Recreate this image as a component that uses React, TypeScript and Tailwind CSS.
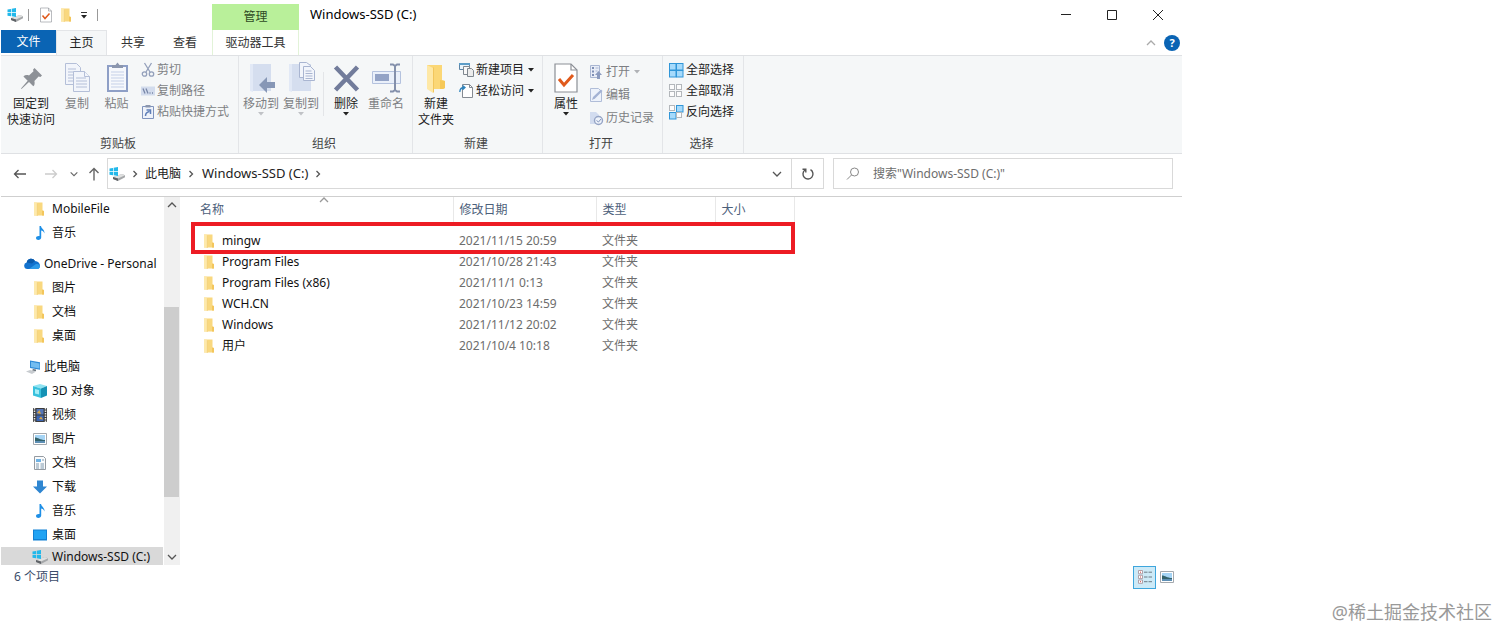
import React, { useState } from 'react';

type IconProps = { className?: string };

const DriveIcon: React.FC<IconProps> = ({ className = 'w-4 h-4 shrink-0' }) => (
  <svg className={className} viewBox="0 0 16 16">
    <path d="M4 11l9-3 3 1.300v2L9 15l-5-2z" fill="#a5a7a9" />
    <path d="M4 11l9-3 3 1.300L9 12.600z" fill="#dfe0e0" />
    <path d="M4 13l5 2v-2.400L4 11z" fill="#5f6368" />
    <path d="M.5 2.500l3.500-.6v3.300H.5zM4.700 1.800l4.300-.7v4.100H4.700zM.5 5.900H4v3.300L.5 8.700zM4.700 5.900H9v4l-4.300-.6z" fill="#22b8ea" />
  </svg>
);

const FolderIcon: React.FC<IconProps> = ({ className = 'w-4 h-4 shrink-0' }) => (
  <svg className={className} viewBox="0 0 16 16">
    <path d="M2 1.500h8.500v8l1.500.5v4.500H2z" fill="#f9d87f" />
    <path d="M2 1.500h2.500l1 1.500v12L2 14z" fill="#fde9ac" />
    <path d="M5.500 3v12l-.6-.2V2.200z" fill="#efc768" />
    <path d="M10 9.500l2 .5v4.500h-2z" fill="#f3c65c" />
  </svg>
);

const BigFolderIcon: React.FC = () => (
  <svg className="w-8 h-8" viewBox="0 0 32 32">
    <path d="M7 3h15v15l3 1v7l-2 1H7z" fill="#fbd776" />
    <path d="M7 3l6 3v25l-6-4z" fill="#fee8a6" />
    <path d="M13 6l1-1v25l-1 1z" fill="#f2c65c" />
    <path d="M20 18l5 1v7l-2 1h-3z" fill="#f6c857" />
  </svg>
);

const CheckDocIcon: React.FC<IconProps> = ({ className = 'w-8 h-8' }) => (
  <svg className={className} viewBox="0 0 32 32" fill="none">
    <path d="M5 2h16l6 6v22H5z" fill="#fff" stroke="#8b8f96" strokeWidth="1.200" />
    <path d="M21 2v6h6" stroke="#8b8f96" strokeWidth="1.200" />
    <path d="M9 17l5 6 9-10" stroke="#e05a1c" strokeWidth="3" />
  </svg>
);

const PinIcon: React.FC = () => (
  <svg className="w-8 h-8" viewBox="0 0 32 32">
    <path d="M19.500 6l7.500 7.500-1.600 1.500-1.800-.5-4.200 4.400c.6 2.400.2 4.200-1.100 5.400l-4.300-4.300L6.500 27 6 26.500l6.700-7.800-4.300-4.300c1.400-1.300 3.300-1.600 5.600-1l4.500-4.200-.5-1.500z" fill="#8d9197" />
  </svg>
);

const CopyIcon: React.FC = () => (
  <svg className="w-8 h-8" viewBox="0 0 32 32" stroke="#b4bfd8" fill="#f2f5fb">
    <path d="M4.500 1.500h11l4 4v17h-15z" />
    <path d="M7 7h8M7 10h9M7 13h9M7 16h9M7 19h9" />
    <path d="M12.500 9.500h11l5 5v15h-16z" />
    <path d="M23.500 9.500v5h5M15 16h10M15 19h11M15 22h11M15 25h11" />
  </svg>
);

const PasteIcon: React.FC = () => (
  <svg className="w-8 h-8" viewBox="0 0 32 32">
    <path d="M7 4h19v25H7z" fill="#f6f8fc" stroke="#8e9fc6" strokeWidth="2" />
    <path d="M11 6V3h3.500l2-2.500 2 2.500H22v3z" fill="#8b96ae" />
    <path d="M10 10h13M10 13h13M10 16h13M10 19h13M10 22h13M10 25h13" stroke="#c5d0e8" />
  </svg>
);

const MoveToIcon: React.FC = () => (
  <svg className="w-8 h-8" viewBox="0 0 32 32">
    <path d="M5 2h21v27H5z" fill="#d5deef" />
    <path d="M5 2h3v28l-3-1z" fill="#e2e9f6" />
    <path d="M14 23l8-8v5h8v6h-8v5z" fill="#8797b6" />
  </svg>
);

const CopyToIcon: React.FC = () => (
  <svg className="w-8 h-8" viewBox="0 0 32 32">
    <path d="M4 2h22v27H4z" fill="#d5deef" />
    <path d="M4 2h3v28l-3-1z" fill="#e2e9f6" />
    <g fill="#f2f5fb" stroke="#a9b5d1">
      <path d="M14.500.5h7l4 3v12h-11z" />
      <path d="M18.500 4.500h7l4 4v10h-11z" />
      <path d="M20.500 9h6M20.500 11.500h7M20.500 14h7M20.500 16.500h7" />
    </g>
  </svg>
);

const DeleteIcon: React.FC = () => (
  <svg className="w-8 h-8" viewBox="0 0 32 32">
    <path d="M5.500 5l22 23M27.500 5l-22 23" stroke="#727c9b" strokeWidth="4.500" />
  </svg>
);

const RenameIcon: React.FC = () => (
  <svg className="w-8 h-8" viewBox="0 0 32 32" fill="none">
    <path d="M2.500 9.500h28v12h-28z" fill="#eaf0fa" stroke="#b4c2de" />
    <path d="M5 12h14v7H5z" fill="#93a3c6" />
    <path d="M20 2.500h3l2 1.500 2-1.500h3M25 4v24M20 29.500h3l2-1.500 2 1.500h3" stroke="#8490ab" strokeWidth="2" />
  </svg>
);

const CutIcon: React.FC = () => (
  <svg className="w-4 h-4" viewBox="0 0 16 16" fill="none" stroke="#94a0bb" strokeWidth="1.300">
    <path d="M4.500 1l5.500 9M11.500 1L6 10" />
    <circle cx="4.500" cy="12" r="2.200" />
    <circle cx="11.500" cy="12" r="2.200" />
  </svg>
);

const PathIcon: React.FC = () => (
  <svg className="w-4 h-4" viewBox="0 0 16 16" fill="none">
    <path d="M1 3.500h14v9H1z" fill="#d3dced" />
    <path d="M3 5.500l2 5M6 5.500l2 5M9.500 10h1M12 10h1" stroke="#7887a8" strokeWidth="1.300" />
  </svg>
);

const ShortcutIcon: React.FC = () => (
  <svg className="w-4 h-4" viewBox="0 0 16 16" fill="none">
    <path d="M2.500 2.500h11v12h-11z" fill="#eef2fa" stroke="#7f93bd" />
    <path d="M5.500 1h5v2.500h-5z" fill="#8b96ae" />
    <path d="M5.500 12c0-3 1.500-4 4-4.500M6.500 6H10.500v4" stroke="#5f7fb8" strokeWidth="1.500" />
  </svg>
);

const NewItemIcon: React.FC = () => (
  <svg className="w-4 h-4" viewBox="0 0 16 16" strokeWidth="1">
    <path d="M.5 1.500h10v6H.5z" fill="#e8f3fb" stroke="#5b84a6" />
    <path d="M0 1h11v2H0z" fill="#5b9cc7" />
    <path d="M4.500 4.500h6v8h-6z" fill="#f8f8f8" stroke="#7f878f" />
    <path d="M8.500 6.500h4l2 2v6h-6z" fill="#ececec" stroke="#7f878f" />
  </svg>
);

const EasyAccessIcon: React.FC = () => (
  <svg className="w-4 h-4" viewBox="0 0 16 16" fill="none">
    <path d="M3.500 1.500h7l3 3v10h-10z" fill="#fff" stroke="#858b92" />
    <path d="M10.500 1.500v3h3" stroke="#858b92" />
    <path d="M.8 9c0-3 1.500-4.500 4.500-4.500M3.500 2.500l2.500 2-2.500 2.300" stroke="#2f84bd" strokeWidth="1.300" />
  </svg>
);

const OpenIcon: React.FC = () => (
  <svg className="w-4 h-4" viewBox="0 0 16 16">
    <path d="M1.500 1.500h9v12h-9z" fill="#e8edf7" stroke="#a9b6d2" />
    <path d="M3 3h2v2H3zM3 6.500h2v2H3zM3 10h2v2H3z" fill="#7e8fb5" />
    <path d="M6.500 4h3M6.500 7h2" stroke="#aab6d2" />
    <path d="M9.500 7l3.500 4h-2v4H8v-4H6z" fill="#8b9bbf" />
  </svg>
);

const EditIcon: React.FC = () => (
  <svg className="w-4 h-4" viewBox="0 0 16 16">
    <path d="M1.500 1.500h8l3 3v10h-11z" fill="#edf2fb" stroke="#b0bdd8" />
    <path d="M3 13l1-3 8-7.500 1.500 1.500L6 11.500z" fill="#a3b2d4" />
  </svg>
);

const HistoryIcon: React.FC = () => (
  <svg className="w-4 h-4" viewBox="0 0 16 16">
    <path d="M1 2h6l3 3v9H1z" fill="#d2dcef" />
    <circle cx="9.500" cy="10.500" r="4" fill="#edf2fa" stroke="#95a4c5" strokeWidth="1.400" />
    <path d="M7.500 10.500l2 1.500 2.500-3" stroke="#8395bd" fill="none" />
  </svg>
);

// 2x2 glyph of the select buttons, a selected cell is larger and blue
const SelectGrid: React.FC<{ on: boolean[] }> = ({ on }) => (
  <svg className="w-4 h-4" viewBox="0 0 16 16">
    {on.map((selected, i) => (
      <rect
        key={i}
        x={i % 2 ? 7.5 : 0.5}
        y={i > 1 ? 8.5 : 1.5}
        width={selected ? 6.5 : 5}
        height={selected ? 6.5 : 5}
        fill={selected ? '#a6dafb' : '#fcfcfc'}
        stroke={selected ? '#3096d8' : '#b3b7bb'}
      />
    ))}
  </svg>
);

const MusicIcon: React.FC = () => (
  <svg className="w-4 h-4 shrink-0" viewBox="0 0 16 16">
    <path d="M7.500 1H9c.3 2.500 3.800 3.500 3.500 7.500-.7-2-2-2.800-3.300-3v7c0 1.500-1.300 2.500-2.800 2.500-1.400 0-2.400-.8-2.400-2 0-1.300 1.300-2.300 3.500-2z" fill="#1e8fe6" />
  </svg>
);

const CloudIcon: React.FC = () => (
  <svg className="w-4 h-4 shrink-0" viewBox="0 0 16 16">
    <path d="M3.300 13a3.300 3.300 0 01-.6-6.500A4.500 4.500 0 0111 5c3 .2 5 2 5 4.800 0 1.900-1.300 3.200-3 3.200z" fill="#1272ce" />
    <path d="M5 13l7-5c2.500-.3 4 .8 4 2.400 0 1.500-1.300 2.600-3 2.600z" fill="#2d9ae8" />
    <path d="M2.700 6.500A4.500 4.500 0 0111 5L8 7.500z" fill="#0b5cad" />
  </svg>
);

const PcIcon: React.FC = () => (
  <svg className="w-4 h-4 shrink-0" viewBox="0 0 16 16">
    <path d="M6 1.500l11 2v7.500L6 9z" fill="#2f8ad6" />
    <path d="M7 2.800l8.500 1.700v5L7 8z" fill="#74bdf0" />
    <path d="M9 10l3 .5v1.700l-4-.7z" fill="#6c757d" />
    <path d="M2 12.500L6 11l6 1.500L8 15z" fill="#c8ccd0" />
  </svg>
);

const CubeIcon: React.FC = () => (
  <svg className="w-4 h-4 shrink-0" viewBox="0 0 16 16">
    <path d="M1 3l7-2 7 2-6 2.500z" fill="#8fe3f2" />
    <path d="M1 3l8 2.500V15L1 12.500z" fill="#38c1dd" />
    <path d="M9 5.500L15 3v9.500L9 15z" fill="#1592b5" />
    <path d="M3 6l4 1v4.500L3 10.500z" fill="#a6edf7" />
  </svg>
);

const VideoIcon: React.FC = () => (
  <svg className="w-4 h-4 shrink-0" viewBox="0 0 16 16">
    <path d="M1 1h14v14H1z" fill="#3d3d3d" />
    <path d="M2.500 1v14M13.500 1v14" stroke="#e6e6e6" strokeWidth="1.500" strokeDasharray="1.500 1" />
    <path d="M4.500 2h7v5.500h-7z" fill="#5576b8" />
    <path d="M4.500 8.500h7V14h-7z" fill="#3c66b4" />
    <path d="M5 6l2.500-3L9 7zM7 12l2-2.500 2 3z" fill="#d9a441" />
  </svg>
);

const PictureIcon: React.FC = () => (
  <svg className="w-4 h-4 shrink-0" viewBox="0 0 16 16">
    <path d="M1.500 2.500h13v11h-13z" fill="#fff" stroke="#a4a9ae" />
    <path d="M3 4h10v8H3z" fill="#a5d4f5" />
    <path d="M3 6.500c3 0 5 2.500 10 2.500v1.500H3z" fill="#33626a" />
    <path d="M3 10h10v2H3z" fill="#5d8fb5" />
  </svg>
);

const DocumentIcon: React.FC = () => (
  <svg className="w-4 h-4 shrink-0" viewBox="0 0 16 16">
    <path d="M2.500 1.500h9l2 2v11h-11z" fill="#fafbfc" stroke="#949ba2" />
    <path d="M4 4h5v3H4z" fill="#6fb2e4" />
    <path d="M10 5h2M4 9h3M4 11h3M4 13h3M8.500 9H12M8.500 11H12M8.500 13H12" stroke="#7e99ae" />
  </svg>
);

const DownloadIcon: React.FC = () => (
  <svg className="w-4 h-4 shrink-0" viewBox="0 0 16 16">
    <path d="M5 1.500h6v6h4L8 14.500l-7-7h4z" fill="#2f86d1" />
  </svg>
);

const DesktopIcon: React.FC = () => (
  <svg className="w-4 h-4 shrink-0" viewBox="0 0 16 16">
    <path d="M1 2.500h14v11H1z" fill="#1180d4" />
    <path d="M2 3.500h12V12H2z" fill="#21a3f3" />
  </svg>
);

const DetailsIcon: React.FC = () => (
  <svg className="w-4 h-4" viewBox="0 0 16 16" fill="none">
    <path d="M1.500 1.500h4v3.300h-4zM1.500 6.300h4v3.300h-4zM1.500 11h4v3.300h-4z" fill="#fff" stroke="#b0a0a8" />
    <path d="M3 3.200h1M3 8h1M3 12.700h1" stroke="#d04545" />
    <path d="M7 3.200h3.500M11.500 3.200H15M7 8h3.500M11.500 8H15M7 12.700h3.500M11.500 12.700H15" stroke="#6d7c86" />
  </svg>
);

const Chevron: React.FC<{ dir: 'up' | 'down' | 'right'; className?: string }> = ({ dir, className = 'w-3 h-3 text-[#555]' }) => {
  const d = { up: 'M2 8l4-4 4 4', down: 'M2 4l4 4 4-4', right: 'M4.500 3l3 3-3 3' }[dir];
  return (
    <svg className={className} viewBox="0 0 12 12" fill="none" stroke="currentColor" strokeWidth="1.300">
      <path d={d} />
    </svg>
  );
};

const Caret: React.FC<IconProps> = ({ className = 'text-[#222]' }) => (
  <svg className={`w-[6px] h-[4px] ${className}`} viewBox="0 0 6 4" fill="currentColor">
    <path d="M0 0h6L3 3.500z" />
  </svg>
);

type BigButtonProps = {
  icon: React.ReactNode;
  lines: string[];
  width?: string;
  disabled?: boolean;
  caret?: boolean;
};

const BigButton: React.FC<BigButtonProps> = ({ icon, lines, width = 'w-10', disabled, caret }) => (
  <button
    type="button"
    disabled={disabled}
    className={`${width} shrink-0 flex flex-col items-center pt-[6px] whitespace-nowrap ${disabled ? 'text-[#7d7f83]' : 'text-[#222]'}`}
  >
    {icon}
    <span className="mt-[2px] leading-4">
      {lines.map(line => <span key={line} className="block">{line}</span>)}
    </span>
    {caret && <Caret className={disabled ? 'text-[#c0c2c6]' : 'text-[#222]'} />}
  </button>
);

type SmallButtonProps = {
  icon: React.ReactNode;
  label: string;
  height?: string;
  disabled?: boolean;
  caret?: boolean;
};

const SmallButton: React.FC<SmallButtonProps> = ({ icon, label, height = 'h-[21px]', disabled, caret }) => (
  <button
    type="button"
    disabled={disabled}
    className={`${height} flex items-center whitespace-nowrap ${disabled ? 'text-[#7d7f83]' : 'text-[#222]'}`}
  >
    {icon}
    <span className="ml-px mr-1">{label}</span>
    {caret && <Caret className={disabled ? 'text-[#b0b2b6]' : 'text-[#222]'} />}
  </button>
);

const RibbonGroup: React.FC<{ title: string; width: string; children: React.ReactNode }> = ({ title, width, children }) => (
  <section className={`${width} shrink-0 flex flex-col border-r border-[#e3e5e8]`}>
    <div className="flex h-20">{children}</div>
    <h2 className="pr-[3px] text-center leading-4 text-[#444]">{title}</h2>
  </section>
);

type NavItem = { label: string; icon: React.ReactNode; root?: boolean; selected?: boolean };

const NAV_ITEMS: NavItem[] = [
  { label: 'MobileFile', icon: <FolderIcon /> },
  { label: '音乐', icon: <MusicIcon /> },
  { label: 'OneDrive - Personal', icon: <CloudIcon />, root: true },
  { label: '图片', icon: <FolderIcon /> },
  { label: '文档', icon: <FolderIcon /> },
  { label: '桌面', icon: <FolderIcon /> },
  { label: '此电脑', icon: <PcIcon />, root: true },
  { label: '3D 对象', icon: <CubeIcon /> },
  { label: '视频', icon: <VideoIcon /> },
  { label: '图片', icon: <PictureIcon /> },
  { label: '文档', icon: <DocumentIcon /> },
  { label: '下载', icon: <DownloadIcon /> },
  { label: '音乐', icon: <MusicIcon /> },
  { label: '桌面', icon: <DesktopIcon /> },
  { label: 'Windows-SSD (C:)', icon: <DriveIcon />, selected: true },
];

const FILES = [
  { name: 'mingw', date: '2021/11/15 20:59' },
  { name: 'Program Files', date: '2021/10/28 21:43' },
  { name: 'Program Files (x86)', date: '2021/11/1 0:13' },
  { name: 'WCH.CN', date: '2021/10/23 14:59' },
  { name: 'Windows', date: '2021/11/12 20:02' },
  { name: '用户', date: '2021/10/4 10:18' },
];

const TitleBar: React.FC = () => (
  <div className="flex h-[30px]">
    <div className="w-[211px] shrink-0 flex items-center pl-[6px]">
      <DriveIcon />
      <div className="w-px h-3 ml-[5px] bg-[#999]"></div>
      <button type="button" aria-label="属性" className="ml-[9px]"><CheckDocIcon className="w-4 h-4" /></button>
      <button type="button" aria-label="新建文件夹" className="ml-[5px]"><FolderIcon /></button>
      <button type="button" aria-label="自定义快速访问工具栏" className="ml-[6px] flex flex-col items-center gap-[2px]">
        <span className="w-[6px] h-px bg-[#333]"></span>
        <Caret />
      </button>
      <div className="w-px h-3 ml-[10px] bg-[#999]"></div>
    </div>
    <div className="w-[87px] shrink-0 mt-1 flex items-center justify-center bg-[#b9f09a] text-[#2f4a25]">管理</div>
    <h1 className="ml-[11px] flex-1 self-center text-[13px] text-black">Windows-SSD (C:)</h1>
    <div className="flex mr-px">
      <button type="button" aria-label="最小化" className="w-[46px] flex items-center justify-center">
        <svg className="w-[10px] h-[10px]" viewBox="0 0 10 10"><path d="M0 4.500h10" stroke="#222" /></svg>
      </button>
      <button type="button" aria-label="最大化" className="w-[46px] flex items-center justify-center">
        <svg className="w-[10px] h-[10px]" viewBox="0 0 10 10"><path d="M.5.5h9v9h-9z" fill="none" stroke="#222" /></svg>
      </button>
      <button type="button" aria-label="关闭" className="w-[46px] flex items-center justify-center">
        <svg className="w-[10px] h-[10px]" viewBox="0 0 10 10"><path d="M0 0l10 10M10 0L0 10" stroke="#222" /></svg>
      </button>
    </div>
  </div>
);

const TabBar: React.FC = () => (
  <nav className="flex h-[25px] text-[#333]">
    <button type="button" className="w-[55px] h-[23px] bg-[#0a64b4] text-white">文件</button>
    <button type="button" className="w-[51px] border-x border-t border-[#e3e5e8] bg-[#f5f7f8] text-[#222]">主页</button>
    <button type="button" className="w-[52px]">共享</button>
    <button type="button" className="w-[52px]">查看</button>
    <button type="button" className="w-[87px] ml-px border-x border-[#e2f3d8]">驱动器工具</button>
    <div className="flex-1"></div>
    <button type="button" aria-label="折叠功能区" className="mr-[7px]"><Chevron dir="up" className="w-3 h-3 text-[#aaa]" /></button>
    <button type="button" aria-label="帮助" className="self-center mr-[2px] w-4 h-4 rounded-full bg-[#0a64b4] text-white text-[11px] leading-4 font-bold">?</button>
  </nav>
);

const Ribbon: React.FC = () => (
  <div className="flex h-[99px] border-y border-[#dfe1e4] bg-[#f5f7f8]">
    <RibbonGroup title="剪贴板" width="w-[238px]">
      <BigButton icon={<PinIcon />} lines={['固定到', '快速访问']} width="w-[60px]" />
      <BigButton icon={<CopyIcon />} lines={['复制']} width="w-[32px]" disabled />
      <BigButton icon={<PasteIcon />} lines={['粘贴']} width="w-[47px]" disabled />
      <div className="pt-[3px] flex flex-col">
        <SmallButton icon={<CutIcon />} label="剪切" disabled />
        <SmallButton icon={<PathIcon />} label="复制路径" disabled />
        <SmallButton icon={<ShortcutIcon />} label="粘贴快捷方式" disabled />
      </div>
    </RibbonGroup>
    <RibbonGroup title="组织" width="w-[174px]">
      <div className="w-[2px]"></div>
      <BigButton icon={<MoveToIcon />} lines={['移动到']} disabled caret />
      <BigButton icon={<CopyToIcon />} lines={['复制到']} disabled caret />
      <div className="w-px mx-[2px] mt-4 h-11 bg-[#e3e5e8]"></div>
      <BigButton icon={<DeleteIcon />} lines={['删除']} caret />
      <BigButton icon={<RenameIcon />} lines={['重命名']} disabled />
    </RibbonGroup>
    <RibbonGroup title="新建" width="w-[130px]">
      <BigButton icon={<BigFolderIcon />} lines={['新建', '文件夹']} width="w-[46px]" />
      <div className="pt-[3px] flex flex-col">
        <SmallButton icon={<NewItemIcon />} label="新建项目" caret />
        <SmallButton icon={<EasyAccessIcon />} label="轻松访问" caret />
      </div>
    </RibbonGroup>
    <RibbonGroup title="打开" width="w-[120px]">
      <BigButton icon={<CheckDocIcon />} lines={['属性']} width="w-[46px]" caret />
      <div className="pt-[4px] flex flex-col">
        <SmallButton icon={<OpenIcon />} label="打开" height="h-[23px]" disabled caret />
        <SmallButton icon={<EditIcon />} label="编辑" height="h-[23px]" disabled />
        <SmallButton icon={<HistoryIcon />} label="历史记录" height="h-[23px]" disabled />
      </div>
    </RibbonGroup>
    <RibbonGroup title="选择" width="w-[81px]">
      <div className="pt-[3px] pl-[6px] flex flex-col">
        <SmallButton icon={<SelectGrid on={[true, true, true, true]} />} label="全部选择" />
        <SmallButton icon={<SelectGrid on={[false, false, false, false]} />} label="全部取消" />
        <SmallButton icon={<SelectGrid on={[false, true, true, false]} />} label="反向选择" />
      </div>
    </RibbonGroup>
  </div>
);

const AddressBar: React.FC = () => {
  const [query, setQuery] = useState('');

  return (
    <div className="flex h-[43px] pt-1 pb-[7px] pr-[9px] border-b border-[#cfcfcf]">
      <div className="w-[106px] shrink-0 flex items-center pl-3">
        <button type="button" aria-label="返回">
          <svg className="w-[14px] h-[14px]" viewBox="0 0 14 14" fill="none" stroke="#555" strokeWidth="1.300"><path d="M13 7H1.500M5.500 3L1.500 7l4 4" /></svg>
        </button>
        <button type="button" aria-label="前进" disabled className="ml-[17px]">
          <svg className="w-[14px] h-[14px]" viewBox="0 0 14 14" fill="none" stroke="#ccc" strokeWidth="1.300"><path d="M1 7h11.500M8.500 3l4 4-4 4" /></svg>
        </button>
        <button type="button" aria-label="最近浏览的位置" className="ml-[11px]"><Chevron dir="down" className="w-[10px] h-[10px] text-[#666]" /></button>
        <button type="button" aria-label="上移" className="ml-2">
          <svg className="w-[14px] h-[14px]" viewBox="0 0 14 14" fill="none" stroke="#666" strokeWidth="1.400"><path d="M7 13.500V1.500M2.500 6L7 1.500 11.500 6" /></svg>
        </button>
      </div>
      <div className="flex-1 flex items-center border border-[#d9d9d9] text-[#222]">
        <span className="ml-px"><DriveIcon /></span>
        <span className="ml-1"><Chevron dir="right" /></span>
        <a href="#pc" className="ml-1">此电脑</a>
        <span className="ml-1"><Chevron dir="right" /></span>
        <a href="#c" className="ml-[5px] text-[13px]">Windows-SSD (C:)</a>
        <span className="ml-1"><Chevron dir="right" /></span>
        <button type="button" aria-label="以前的位置" className="ml-auto mr-2"><Chevron dir="down" /></button>
      </div>
      <button type="button" aria-label="刷新" className="w-8 flex items-center justify-center border-y border-r border-[#d9d9d9]">
        <svg className="w-[14px] h-[14px]" viewBox="0 0 14 14" fill="none" stroke="#555" strokeWidth="1.400"><path d="M9.500 2.700a5 5 0 11-5.500.3M1.500 2.200h3.300v3.300" /></svg>
      </button>
      <label className="w-[340px] ml-[9px] flex items-center border border-[#d9d9d9]">
        <svg className="w-[14px] h-[14px] ml-3 shrink-0" viewBox="0 0 14 14" fill="none" stroke="#888"><circle cx="8.500" cy="5" r="4" /><path d="M5.500 8L1 12.500" /></svg>
        <input
          type="text"
          aria-label="搜索"
          value={query}
          onChange={e => setQuery(e.target.value)}
          placeholder={'搜索"Windows-SSD (C:)"'}
          className="ml-[13px] flex-1 min-w-0 outline-none placeholder:text-[#6d6d6d]"
        />
      </label>
    </div>
  );
};

const Sidebar: React.FC = () => (
  <aside className="w-[179px] shrink-0 flex">
    <ul className="flex-1 leading-4">
      {NAV_ITEMS.map((item, i) => (
        <li key={i} className={item.root ? 'mt-[7px]' : ''}>
          <a
            href="#nav"
            className={`flex gap-1 whitespace-nowrap text-[#111] ${item.root ? 'pl-[23px]' : 'pl-[31px]'} ${item.selected ? 'h-[18px] items-end bg-[#d9d9d9]' : 'h-6 items-center'}`}
          >
            {item.icon}
            <span>{item.label}</span>
          </a>
        </li>
      ))}
    </ul>
    <div className="w-4 ml-px flex flex-col items-center bg-[#f0f0f0]">
      <button type="button" aria-label="向上滚动" className="h-4 flex items-center"><Chevron dir="up" /></button>
      <div className="flex-1 w-full pt-[94px]">
        <div className="h-[190px] w-[15px] bg-[#cdcdcd]"></div>
      </div>
      <button type="button" aria-label="向下滚动" className="h-4 flex items-center"><Chevron dir="down" /></button>
    </div>
  </aside>
);

const FileList: React.FC = () => (
  <div className="relative ml-[11px] w-[604px] self-start">
    <table className="w-full table-fixed text-left">
      <thead>
        <tr className="h-[25px] text-[#4c607a]">
          <th className="relative w-[262px] pl-[9px] font-normal border-r border-[#e8e8e8]">
            名称
            <Chevron dir="up" className="absolute left-[127px] -top-[3px] w-3 h-3 text-[#999]" />
          </th>
          <th className="w-[143px] pl-[6px] font-normal border-r border-[#e8e8e8]">修改日期</th>
          <th className="w-[119px] pl-[6px] font-normal border-r border-[#e8e8e8]">类型</th>
          <th className="pl-[6px] font-normal border-r border-[#e8e8e8]">大小</th>
        </tr>
      </thead>
      <tbody className="text-[#6d6d6d] before:block before:h-2">
        {FILES.map(file => (
          <tr key={file.name} className="h-[21px]">
            <td className="p-0 pl-[11px]">
              <div className="flex items-center gap-1 h-[21px] text-[#111]">
                <FolderIcon />
                {file.name}
              </div>
            </td>
            <td className="p-0 pl-[6px]">{file.date}</td>
            <td className="p-0 pl-[6px]">文件夹</td>
            <td></td>
          </tr>
        ))}
      </tbody>
    </table>
    <div className="absolute inset-x-0 top-[25px] h-8 border-4 border-[#ed1c24] pointer-events-none"></div>
  </div>
);

const App: React.FC = () => (
  <div className="min-h-screen bg-white font-['Noto_Sans','Noto_Sans_CJK_SC',sans-serif] text-xs">
    <main className="pl-px mr-[330px]">
      <TitleBar />
      <TabBar />
      <Ribbon />
      <AddressBar />
      <div className="flex">
        <Sidebar />
        <FileList />
      </div>
      <footer className="flex items-center justify-between h-6 pl-[13px] pr-[7px]">
        <span className="text-[#3c4d6b]">6 个项目</span>
        <div className="flex items-center gap-[3px]">
          <button type="button" aria-label="详细信息" className="w-[23px] h-[23px] flex items-center justify-center border border-[#3ea6dd] bg-[#cdeaf7]"><DetailsIcon /></button>
          <button type="button" aria-label="大图标"><PictureIcon /></button>
        </div>
      </footer>
    </main>
    <p className="mt-[9px] pr-5 text-right text-[18px] leading-7 text-[#999]">@稀土掘金技术社区</p>
  </div>
);

export default App;
